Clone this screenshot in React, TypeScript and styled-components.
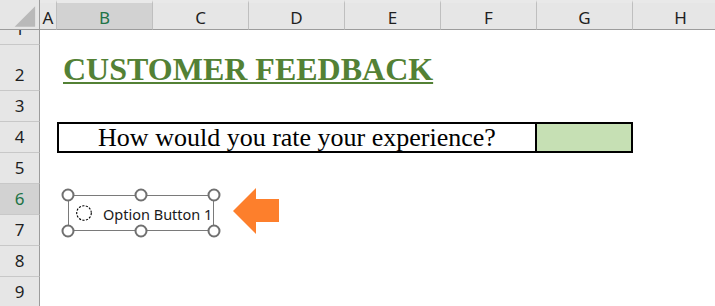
import React from "react";
import styled, { createGlobalStyle } from "styled-components";

const Global = createGlobalStyle`
  html, body { margin: 0; padding: 0; background: #fff; overflow: hidden; }
  * { box-sizing: border-box; }
`;

const Sheet = styled.div`
  position: relative;
  display: grid;
  grid-template-columns: 40px 17px repeat(7, 96px);
  grid-template-rows: 30px 15px 46px repeat(7, 31px);
  width: 715px;
  height: 306px;
  overflow: hidden;
  background: #fff;
  font-family: "Noto Sans", "Open Sans", sans-serif;
`;

const Corner = styled.div`
  grid-row: 1;
  grid-column: 1;
  background: #e6e6e6;
  border-right: 1px solid #9c9c9c;
  border-bottom: 1px solid #9c9c9c;
  display: flex;
`;

const ColHeader = styled.div<{ $col: number; $selected?: boolean }>`
  grid-row: 1;
  grid-column: ${(p) => p.$col};
  background: ${(p) => (p.$selected ? "#d2d2d2" : "#e6e6e6")};
  color: ${(p) => (p.$selected ? "#217346" : "#1f1f1f")};
  border-top: 3px solid #e9e9e9;
  border-right: 1px solid #bfbfbf;
  border-bottom: 1px solid #9c9c9c;
  display: flex;
  align-items: center;
  justify-content: center;
  padding-top: 4px;
  font-size: 17px;
  line-height: 20px;
`;

const RowHeader = styled.div<{ $row: number; $selected?: boolean }>`
  grid-column: 1;
  grid-row: ${(p) => p.$row};
  background: ${(p) => (p.$selected ? "#d2d2d2" : "#e6e6e6")};
  color: ${(p) => (p.$selected ? "#217346" : "#1f1f1f")};
  border-right: 1px solid #9c9c9c;
  border-bottom: 1px solid #c8c8c8;
  display: flex;
  align-items: flex-end;
  justify-content: center;
  overflow: hidden;
  padding-bottom: 1px;
  font-size: 17px;
`;

const RowLabel = styled.span`
  display: block;
  flex-shrink: 0;
  height: 28px;
  line-height: 28px;
`;

const TitleCell = styled.div`
  grid-row: 3;
  grid-column: 3 / 10;
  display: flex;
  align-items: flex-end;
  padding: 0 0 4px 6px;
  white-space: nowrap;
  font-family: "Liberation Serif", "Times New Roman", serif;
  font-weight: 700;
  font-size: 32px;
  line-height: 36px;
  color: #538135;
  text-decoration: underline;
  text-decoration-thickness: 2px;
  text-underline-offset: 2px;
`;

const QuestionBox = styled.div`
  grid-row: 5;
  grid-column: 3 / span 5;
  border: 2px solid #000;
  display: flex;
  align-items: center;
  justify-content: center;
  white-space: nowrap;
  font-family: "Liberation Serif", "Times New Roman", serif;
  font-size: 26px;
  line-height: 27px;
  color: #000;
`;

const AnswerCell = styled.div`
  grid-row: 5;
  grid-column: 8;
  background: #c6e0b4;
  border: 2px solid #000;
  border-left: none;
`;

const ControlWrap = styled.div`
  position: absolute;
  left: 68px;
  top: 195px;
  width: 146px;
  height: 36px;
`;

const ControlFrame = styled.div`
  width: 100%;
  height: 100%;
  border: 1px solid #7a7a7a;
  display: flex;
  align-items: center;
  padding-left: 7px;
  background: #fff;
`;

const RadioCircle = styled.svg`
  flex-shrink: 0;
  display: block;
`;

const OptionLabel = styled.span`
  margin-left: 11px;
  margin-top: 1px;
  white-space: nowrap;
  font-family: "Noto Sans", "Open Sans", sans-serif;
  font-size: 14.5px;
  color: #1a1a1a;
`;

const Handle = styled.span<{ $x: number; $y: number }>`
  position: absolute;
  left: ${(p) => p.$x}%;
  top: ${(p) => p.$y}%;
  width: 13px;
  height: 13px;
  transform: translate(-50%, -50%);
  border: 2.5px solid #707070;
  border-radius: 50%;
  background: #fff;
`;

const Arrow = styled.svg`
  position: absolute;
  left: 233px;
  top: 188px;
`;

const cols = ["A", "B", "C", "D", "E", "F", "G", "H"];
const rows = [1, 2, 3, 4, 5, 6, 7, 8, 9];
const handles: [number, number][] = [
  [0, 0],
  [50, 0],
  [100, 0],
  [0, 100],
  [50, 100],
  [100, 100],
];

export default function App() {
  return (
    <>
      <Global />
      <Sheet>
        <Corner>
          <svg width="40" height="29" viewBox="0 0 40 29">
            <polygon points="15,27 36,27 36,6" fill="#b9b9b9" />
          </svg>
        </Corner>
        {cols.map((c, i) => (
          <ColHeader key={c} $col={i + 2} $selected={c === "B"}>
            {c}
          </ColHeader>
        ))}
        {rows.map((r) => (
          <RowHeader key={r} $row={r + 1} $selected={r === 6}>
            <RowLabel>{r}</RowLabel>
          </RowHeader>
        ))}
        <TitleCell>CUSTOMER FEEDBACK</TitleCell>
        <QuestionBox>How would you rate your experience?</QuestionBox>
        <AnswerCell />

        <ControlWrap>
          <ControlFrame>
            <RadioCircle width="16" height="16" viewBox="0 0 16 16">
              <circle
                cx="8"
                cy="8"
                r="7.3"
                fill="none"
                stroke="#000"
                strokeWidth="1.1"
                strokeDasharray="2.2 1.4"
              />
            </RadioCircle>
            <OptionLabel>Option Button 1</OptionLabel>
          </ControlFrame>
          {handles.map(([x, y]) => (
            <Handle key={`${x}-${y}`} $x={x} $y={y} />
          ))}
        </ControlWrap>

        <Arrow width="47" height="47" viewBox="0 0 47 47">
          <polygon
            points="0,23 23,0 23,11 46,11 46,34 23,34 23,46"
            fill="#fd7f2c"
          />
        </Arrow>
      </Sheet>
    </>
  );
}
